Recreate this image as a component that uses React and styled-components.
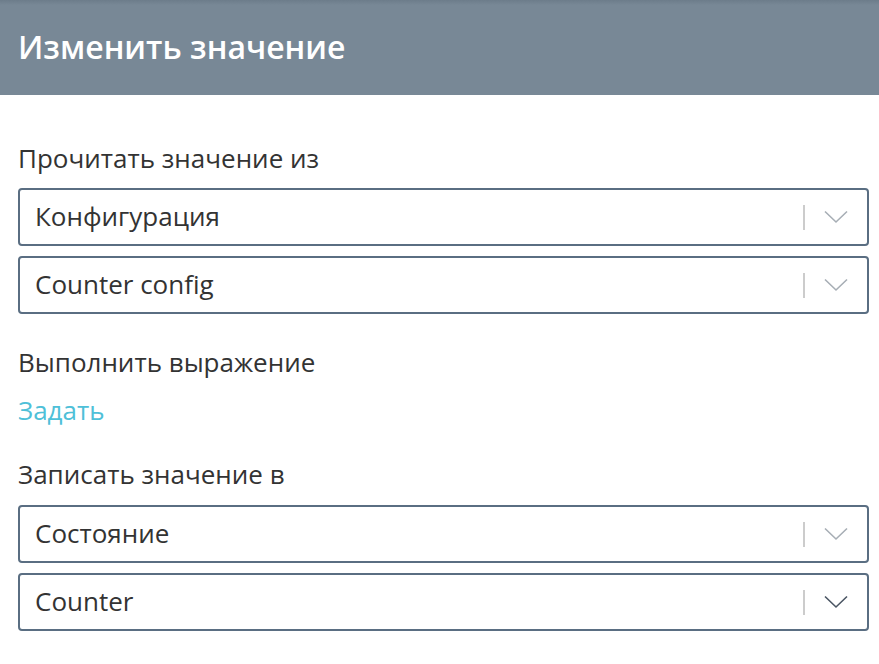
import React from "react";
import styled, { createGlobalStyle } from "styled-components";

const GlobalStyle = createGlobalStyle`
  html, body {
    margin: 0;
    padding: 0;
    background: #ffffff;
  }
  body {
    font-family: "Open Sans", "Noto Sans", sans-serif;
  }
`;

const Page = styled.div`
  width: 879px;
  min-height: 664px;
  background: #ffffff;
`;

const Header = styled.header`
  height: 95px;
  background: linear-gradient(to bottom, #6c7c8a 0px, #788896 5px, #788896 100%);
  display: flex;
  align-items: center;
  padding: 0 18px;
  box-sizing: border-box;
`;

const Title = styled.h1`
  margin: 0;
  font-size: 32px;
  font-weight: 600;
  color: #ffffff;
  line-height: 40px;
  margin-top: -2px;
`;

const Body = styled.div`
  padding: 46px 10px 0 18px;
  display: flex;
  flex-direction: column;
`;

const Label = styled.div`
  font-size: 26px;
  color: #333333;
  line-height: 34px;
  margin-top: ${(p) => p.$top || 0}px;
  margin-bottom: ${(p) => p.$bottom || 0}px;
`;

const Link = styled.a`
  font-size: 26px;
  line-height: 34px;
  color: #4ec0d8;
  text-decoration: none;
  margin-top: 14px;
  cursor: pointer;
`;

const Select = styled.div`
  height: 58px;
  flex-shrink: 0;
  box-sizing: border-box;
  border: 2px solid #5a6e82;
  border-radius: 4px;
  display: flex;
  align-items: center;
  padding-left: 15px;
  margin-bottom: 10px;
  background: #fff;
`;

const Value = styled.span`
  flex: 1;
  font-size: 26px;
  line-height: 34px;
  color: #333333;
  margin-top: -2px;
`;

const Separator = styled.span`
  width: 2px;
  height: 25px;
  background: #cccccc;
`;

const Arrow = styled.span`
  width: 62px;
  display: flex;
  align-items: center;
  justify-content: center;
  color: ${(p) => (p.$dark ? "#4a5563" : "#a7aeb5")};
`;

const Chevron = () => (
  <svg width="24" height="14" viewBox="0 0 24 14" fill="none">
    <path d="M1 1.5 L12 12 L23 1.5" stroke="currentColor" strokeWidth="1.6" />
  </svg>
);

const Dropdown = ({ value, dark }) => (
  <Select>
    <Value>{value}</Value>
    <Separator />
    <Arrow $dark={dark}>
      <Chevron />
    </Arrow>
  </Select>
);

export default function App() {
  return (
    <Page>
      <GlobalStyle />
      <Header>
        <Title>Изменить значение</Title>
      </Header>
      <Body>
        <Label $bottom={13}>Прочитать значение из</Label>
        <Dropdown value="Конфигурация" />
        <Dropdown value="Counter config" />
        <Label $top={21}>Выполнить выражение</Label>
        <Link>Задать</Link>
        <Label $top={30} $bottom={14}>Записать значение в</Label>
        <Dropdown value="Состояние" />
        <Dropdown value="Counter" dark />
      </Body>
    </Page>
  );
}
